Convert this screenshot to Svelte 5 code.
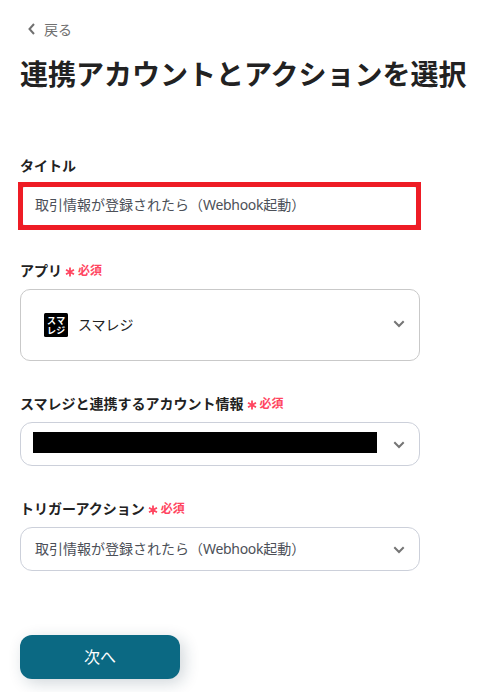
<script>
  const appName = 'スマレジ';
</script>

{#snippet action()}
  <span>取引情報が登録されたら（<span class="latin">Webhook</span>起動）</span>
{/snippet}

{#snippet chevron()}
  <svg class="chevron" width="12" height="8" viewBox="0 0 12 8" aria-hidden="true">
    <path d="M1.3 1.3 6 6l4.7-4.7" />
  </svg>
{/snippet}

{#snippet required()}
  <span class="required">
    <svg width="10" height="10" viewBox="0 0 10 10" aria-hidden="true">
      <path d="M5 .5v9M1 2.8l8 4.400M9 2.8 1 7.200" />
    </svg>
    <span>必須</span>
  </span>
{/snippet}

<main>
  <a class="back" href="#back">
    <svg width="7" height="12" viewBox="0 0 7 12" aria-hidden="true"><path d="M6 1 1.500 6 6 11" /></svg>
    <span>戻る</span>
  </a>
  <h1>連携アカウントとアクションを選択</h1>

  <section class="title-field">
    <div class="label">タイトル</div>
    <div class="marked"><div class="input">{@render action()}</div></div>
  </section>

  <section>
    <div class="label">アプリ{@render required()}</div>
    <div class="box app">
      <svg class="logo" width="24" height="24" viewBox="0 0 24 24">
        <rect width="24" height="24" rx="1.500" />
        <text y="10.700" x="3 12.200">スマ</text>
        <text y="21" x="3 12.200">レジ</text>
      </svg>
      <span class="app-name">{appName}</span>
      {@render chevron()}
    </div>
  </section>

  <section>
    <div class="label">{appName}と連携するアカウント情報{@render required()}</div>
    <div class="box account">
      <div class="redacted"></div>
      {@render chevron()}
    </div>
  </section>

  <section>
    <div class="label">トリガーアクション{@render required()}</div>
    <div class="box">
      {@render action()}
      {@render chevron()}
    </div>
  </section>

  <button>次へ</button>
</main>

<style>
  :global(body) {
    background: #fff;
  }
  main {
    box-sizing: border-box;
    width: 487px;
    height: 692px;
    padding: 20px 0 0 20px;
    overflow: hidden;
    font-family: 'Noto Sans', 'Noto Sans CJK JP', sans-serif;
    font-size: 14px;
    line-height: 20px;
    color: #222;
  }
  svg {
    flex: none;
    fill: none;
    stroke-width: 2;
  }
  .back {
    display: flex;
    align-items: center;
    gap: 9px;
    height: 20px;
    padding-left: 8px;
    color: #707070;
    text-decoration: none;
  }
  .back svg {
    stroke: #707070;
    margin-top: -2px;
  }
  h1 {
    margin: 14px 0 62px;
    font-size: 28px;
    line-height: 40px;
    font-weight: 700;
    white-space: nowrap;
  }
  section {
    width: 400px;
    margin-bottom: 33px;
  }
  .title-field {
    margin-bottom: 31px;
  }
  .label {
    display: flex;
    align-items: center;
    height: 20px;
    padding-bottom: 8px;
    font-weight: 700;
    line-height: 20px;
    white-space: nowrap;
  }
  .title-field .label {
    padding-bottom: 6px;
  }
  .required {
    display: flex;
    align-items: center;
    gap: 3px;
    margin-left: 3px;
    font-size: 12px;
    color: #ff4560;
  }
  .required svg {
    stroke: #ff4560;
    stroke-width: 1.800;
    margin-top: 2px;
  }
  .latin {
    letter-spacing: -0.3px;
  }
  .marked {
    box-sizing: border-box;
    width: 403px;
    height: 48px;
    margin-left: -2px;
    border: 5px solid #ee1c25;
    background: #ccd0d5;
  }
  .input {
    box-sizing: border-box;
    height: 38px;
    padding: 8px 12px;
    border-radius: 2px;
    background: #fff;
    color: #4c5058;
  }
  .box {
    box-sizing: border-box;
    display: flex;
    align-items: center;
    justify-content: space-between;
    height: 44px;
    padding: 0 14px;
    border: 1px solid #ccd0da;
    border-radius: 12px;
    color: #4c5058;
  }
  .chevron {
    stroke: #757575;
    margin-top: 2px;
  }
  .app {
    height: 72px;
    padding-left: 23px;
    border-color: #c9c9c9;
    border-radius: 10px;
    color: #222;
  }
  .app .chevron {
    margin-top: -2px;
  }
  .app-name {
    flex: 1;
    margin-left: 10px;
  }
  .logo rect {
    fill: #000;
  }
  .logo text {
    fill: #fff;
    font-family: 'Liberation Sans', 'Noto Sans CJK JP', sans-serif;
    font-size: 9px;
    font-weight: 700;
  }
  .account {
    padding-left: 12px;
  }
  .redacted {
    width: 344px;
    height: 21px;
    margin-bottom: 3px;
    background: #000;
  }
  button {
    display: block;
    width: 160px;
    height: 44px;
    margin-top: 64px;
    padding: 0;
    border: 0;
    border-radius: 12px;
    background: #0b6983;
    color: #fff;
    font: 16px/44px 'Noto Sans', 'Noto Sans CJK JP', sans-serif;
    box-shadow: 4px 4px 16px rgba(20, 50, 70, 0.2);
  }
</style>
